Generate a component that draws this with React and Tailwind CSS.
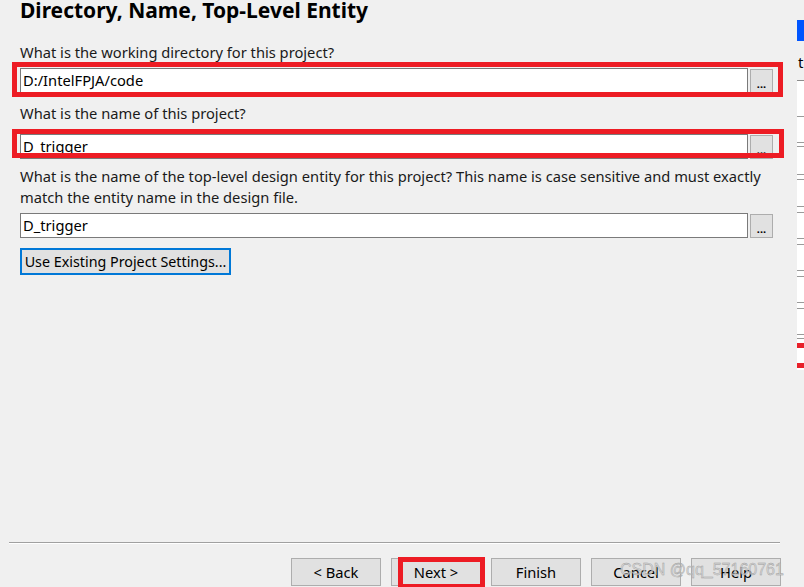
import React from "react";

const font = { fontFamily: '"Noto Sans", "Open Sans", sans-serif' };

function PathRow({ value, className = "" }) {
  return (
    <div className={`flex items-start gap-[2px] ${className}`}>
      <div className="w-[728px] h-[25px] bg-white border border-[#7a7a7a] flex items-center pl-[2px] text-[14.7px] text-black">
        {value}
      </div>
      <button className="w-[23px] h-[24px] mt-[1px] bg-[#e1e1e1] border border-[#adadad] flex items-end justify-center pb-[3px] text-[11px] font-bold leading-none text-black">
        ...
      </button>
    </div>
  );
}

function FooterButton({ children }) {
  return (
    <button className="w-[90px] h-[28px] bg-[#e1e1e1] border border-[#adadad] text-[14.7px] text-black flex items-center justify-center">
      {children}
    </button>
  );
}

function SidePanel() {
  const lines = [115, 141, 145, 173, 178, 205, 211, 237, 243, 269, 275, 301, 307, 333, 337];
  return (
    <div className="w-[7px] flex flex-col pt-[20px]">
      <div className="h-[21px] bg-[#0055ff]" />
      <div className="h-[39px] text-[15px] leading-none pt-[14px] pl-px text-black overflow-hidden">t</div>
      <div className="relative h-[290px] bg-white border-t border-[#8c8c8c]">
        {lines.map((y) => (
          <div key={y} className="absolute left-0 right-0 h-px bg-[#9a9a9a]" style={{ top: y - 80 }} />
        ))}
        <div className="absolute left-0 right-0 top-[262px] h-[5px] bg-[#e8202a]" />
        <div className="absolute left-0 right-0 top-[282px] h-[5px] bg-[#e8202a]" />
      </div>
    </div>
  );
}

export default function App() {
  return (
    <div className="relative w-[804px] h-[587px] bg-[#f0f0f0] overflow-hidden flex" style={font}>
      <div className="w-[797px] flex flex-col">
        <div className="pl-[20px] flex flex-col text-[#1a1a1a]">
          <h1 className="text-[21px] leading-[20px] font-bold text-black">Directory, Name, Top-Level Entity</h1>
          <div className="mt-[22px] text-[14.7px] leading-[20px]">What is the working directory for this project?</div>
          <PathRow value="D:/IntelFPJA/code" className="mt-[6px]" />
          <div className="mt-[10px] text-[14.7px] leading-[20px]">What is the name of this project?</div>
          <PathRow value="D_trigger" className="mt-[11px]" />
          <div className="mt-[7px] text-[14.7px] leading-[21px] w-[750px]">
            What is the name of the top-level design entity for this project? This name is case sensitive and must exactly match the entity name in the design file.
          </div>
          <PathRow value="D_trigger" className="mt-[5px]" />
          <button className="mt-[10px] self-start w-[211px] h-[27px] bg-[#e1e1e1] border-2 border-[#0078d7] text-[14.3px] text-black flex items-center justify-center whitespace-nowrap">
            Use Existing Project Settings...
          </button>
        </div>

        <div className="mt-auto ml-[9px] w-[771px] h-[2px] border-t border-[#a0a0a0] bg-white" />
        <div className="mt-[14px] pl-[291px] flex gap-[10px]">
          <FooterButton>&lt; Back</FooterButton>
          <FooterButton>Next &gt;</FooterButton>
          <FooterButton>Finish</FooterButton>
          <FooterButton>Cancel</FooterButton>
          <FooterButton>Help</FooterButton>
        </div>
        <div className="h-[1px]" />
      </div>
      <SidePanel />

      {/* red annotation boxes */}
      <div className="absolute left-[12px] top-[62px] w-[771px] h-[35px] border-[5px] border-[#ed1c24] pointer-events-none" />
      <div className="absolute left-[12px] top-[129px] w-[772px] h-[29px] border-[5px] border-[#ed1c24] pointer-events-none" />
      <div className="absolute left-[398px] top-[557px] w-[87px] h-[32px] border-[5px] border-[#ed1c24] pointer-events-none" />

      {/* watermark */}
      <div
        className="absolute left-[620px] top-[559px] text-[16px] leading-[22px] text-[#d6d6d6]/80 pointer-events-none"
        style={{ fontFamily: '"Liberation Sans", Arial, sans-serif', WebkitTextStroke: "0.4px #9a9a9a" }}
      >
        CSDN @qq_57160761
      </div>
    </div>
  );
}
